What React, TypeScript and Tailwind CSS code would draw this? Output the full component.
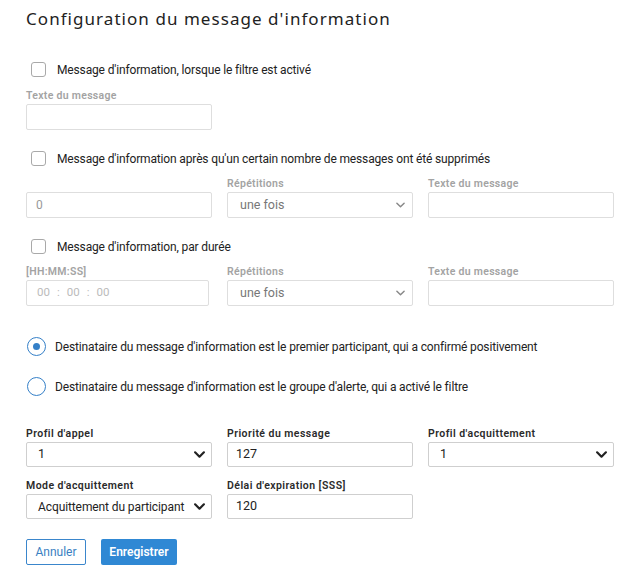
import { useState } from 'react';

const body = { fontFamily: 'Roboto, "Noto Sans", sans-serif' };

function Checkbox({ label }: { label: string }) {
  return (
    <label className="flex items-center gap-[11px] pl-[5px] text-[12px] leading-[14px] text-[#222]">
      <span className="h-[15px] w-[15px] shrink-0 rounded-[3px] border border-[#a9a9a9] bg-white" />
      <span className="tracking-[-0.15px]">{label}</span>
    </label>
  );
}

function Label({ children, dark }: { children: React.ReactNode; dark?: boolean }) {
  return (
    <div
      className={`mb-[2px] h-[12px] text-[10.5px] leading-[12px] font-semibold ${
        dark ? 'text-[#2a2a2a] tracking-[0.45px]' : 'text-[#a3a3a3] tracking-[0.3px]'
      }`}
    >
      {children}
    </div>
  );
}

function Chevron({ dark }: { dark?: boolean }) {
  return (
    <svg
      width={dark ? 11 : 9}
      height={dark ? 7 : 6}
      viewBox="0 0 10 6"
      fill="none"
      stroke={dark ? '#222' : '#888'}
      strokeWidth={dark ? 2 : 1.6}
      strokeLinecap="round"
      strokeLinejoin="round"
      className="shrink-0"
    >
      <path d="M1 1l4 4 4-4" />
    </svg>
  );
}

function Radio({ checked, label, onClick }: { checked: boolean; label: string; onClick: () => void }) {
  return (
    <button type="button" onClick={onClick} className="flex items-center gap-[9px] text-left text-[12px] text-[#222]">
      <span className="flex h-[19px] w-[19px] shrink-0 items-center justify-center rounded-full border-[1.5px] border-[#3580c8] bg-white">
        {checked && <span className="h-[7px] w-[7px] rounded-full bg-[#3580c8]" />}
      </span>
      <span className="tracking-[-0.15px]">{label}</span>
    </button>
  );
}

export default function App() {
  const [recipient, setRecipient] = useState<'first' | 'group'>('first');

  const lightBox = 'h-[26px] w-[186px] rounded-[2px] border border-[#dedede] bg-white';
  const darkBox = 'flex h-[25px] w-[186px] items-center rounded-[2px] border border-[#cfcfcf] bg-white text-[12.5px] text-[#222]';

  return (
    <div className="min-h-[574px] w-[636px] bg-white pl-[26px] pt-[9px]" style={body}>
      {/* Title */}
      <h1
        className="h-[20px] text-[17px] leading-[20px] tracking-[1.05px] text-[#222]"
        style={{ fontFamily: '"Noto Sans", sans-serif' }}
      >
        Configuration du message d'information
      </h1>

      {/* Filter activated */}
      <div className="mt-[33px]">
        <Checkbox label="Message d'information, lorsque le filtre est activé" />
      </div>
      <div className="mt-[13px]">
        <Label>Texte du message</Label>
        <div className={lightBox} />
      </div>

      {/* After deleted messages */}
      <div className="mt-[21px]">
        <Checkbox label="Message d'information après qu'un certain nombre de messages ont été supprimés" />
      </div>
      <div className="mt-[12px] grid grid-cols-[186px_186px_186px] gap-x-[15px]">
        <div>
          <Label>&nbsp;</Label>
          <div className={`${lightBox} flex items-center px-[9px] text-[12px] text-[#999]`}>0</div>
        </div>
        <div>
          <Label>Répétitions</Label>
          <div className={`${lightBox} flex items-center justify-between pl-[12px] pr-[7px] text-[12.5px] text-[#777]`}>
            <span>une fois</span>
            <Chevron />
          </div>
        </div>
        <div>
          <Label>Texte du message</Label>
          <div className={lightBox} />
        </div>
      </div>

      {/* By duration */}
      <div className="mt-[21px]">
        <Checkbox label="Message d'information, par durée" />
      </div>
      <div className="mt-[12px] grid grid-cols-[186px_186px_186px] gap-x-[15px]">
        <div>
          <Label>[HH:MM:SS]</Label>
          <div className="flex h-[26px] w-[183px] items-center gap-[7px] rounded-[2px] border border-[#dedede] bg-white pl-[10px] text-[11.5px] text-[#bbb]">
            <span>00</span>
            <span>:</span>
            <span>00</span>
            <span>:</span>
            <span>00</span>
          </div>
        </div>
        <div>
          <Label>Répétitions</Label>
          <div className={`${lightBox} flex items-center justify-between pl-[12px] pr-[7px] text-[12.5px] text-[#777]`}>
            <span>une fois</span>
            <Chevron />
          </div>
        </div>
        <div>
          <Label>Texte du message</Label>
          <div className={lightBox} />
        </div>
      </div>

      {/* Recipient */}
      <div className="mt-[31px] pl-[1px]">
        <Radio
          checked={recipient === 'first'}
          onClick={() => setRecipient('first')}
          label="Destinataire du message d'information est le premier participant, qui a confirmé positivement"
        />
      </div>
      <div className="mt-[21px] pl-[1px]">
        <Radio
          checked={recipient === 'group'}
          onClick={() => setRecipient('group')}
          label="Destinataire du message d'information est le groupe d'alerte, qui a activé le filtre"
        />
      </div>

      {/* Profiles */}
      <div className="mt-[32px] grid grid-cols-[186px_186px_186px] gap-x-[15px] gap-y-[13px]">
        <div>
          <Label dark>Profil d'appel</Label>
          <div className={`${darkBox} justify-between pl-[11px] pr-[6px]`}>
            <span>1</span>
            <Chevron dark />
          </div>
        </div>
        <div>
          <Label dark>Priorité du message</Label>
          <div className={`${darkBox} px-[8px]`}>127</div>
        </div>
        <div>
          <Label dark>Profil d'acquittement</Label>
          <div className={`${darkBox} justify-between pl-[11px] pr-[6px]`}>
            <span>1</span>
            <Chevron dark />
          </div>
        </div>
        <div>
          <Label dark>Mode d'acquittement</Label>
          <div className={`${darkBox} justify-between pl-[11px] pr-[6px]`}>
            <span className="text-[12px] tracking-[-0.1px]">Acquittement du participant</span>
            <Chevron dark />
          </div>
        </div>
        <div>
          <Label dark>Délai d'expiration [SSS]</Label>
          <div className={`${darkBox} px-[8px]`}>120</div>
        </div>
      </div>

      {/* Actions */}
      <div className="mt-[20px] flex items-center gap-[15px] pb-[10px]">
        <button
          type="button"
          className="h-[26px] w-[60px] rounded-[2px] border border-[#3a86cc] bg-white text-[12px] text-[#3a7fc2]"
        >
          Annuler
        </button>
        <button
          type="button"
          className="h-[26px] w-[76px] rounded-[2px] bg-[#2f88d4] text-[12px] font-semibold text-white"
        >
          Enregistrer
        </button>
      </div>
    </div>
  );
}
